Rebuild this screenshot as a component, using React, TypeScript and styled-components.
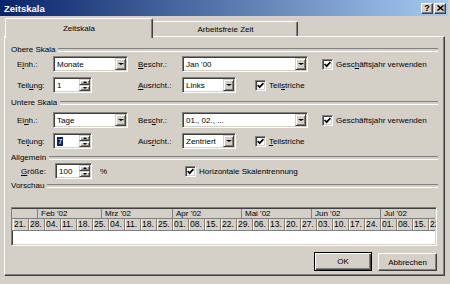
import React from 'react';
import styled, { createGlobalStyle } from 'styled-components';

const Global = createGlobalStyle`
  html, body { margin: 0; padding: 0; background: #d4d0c8; }
  body { font-family: "Liberation Sans", Arial, sans-serif; font-size: 8px; color: #000; }
  * { box-sizing: border-box; }
`;

const Window = styled.div`
  width: 450px;
  height: 284px;
  background: #d4d0c8;
  overflow: hidden;
  display: flex;
  flex-direction: column;
`;

const TitleBar = styled.div`
  height: 16px;
  width: 448px;
  background: linear-gradient(to right, #0a246a, #a6caf0);
  display: flex;
  align-items: center;
  justify-content: space-between;
  padding: 0 2px 0 4px;
`;

const TitleText = styled.span`
  color: #fff;
  font-weight: bold;
  font-size: 9.5px;
`;

const CaptionButtons = styled.div`
  display: flex;
  gap: 1px;
`;

const CaptionButton = styled.div`
  width: 12px;
  height: 11px;
  background: #d4d0c8;
  border-top: 1px solid #fff;
  border-left: 1px solid #fff;
  border-right: 1px solid #404040;
  border-bottom: 1px solid #404040;
  box-shadow: inset -1px -1px 0 #808080;
  display: flex;
  align-items: center;
  justify-content: center;
  font-weight: bold;
  font-size: 9px;
  line-height: 1;
`;

const Body = styled.div`
  padding: 2px 0 0 4px;
  display: flex;
  flex-direction: column;
`;

const TabStrip = styled.div`
  display: flex;
  align-items: flex-end;
  height: 18px;
  padding-left: 1px;
  position: relative;
  z-index: 1;
`;

const Tab = styled.div<{ $active?: boolean; $w: number }>`
  width: ${p => p.$w}px;
  height: ${p => (p.$active ? 20 : 15)}px;
  margin-bottom: ${p => (p.$active ? -2 : 0)}px;
  background: #d4d0c8;
  border-top: 1px solid #fff;
  border-left: 1px solid ${p => (p.$active ? '#fff' : 'transparent')};
  border-right: 1px solid #404040;
  border-radius: 2px 2px 0 0;
  box-shadow: inset -1px 0 0 #808080;
  display: flex;
  align-items: ${p => (p.$active ? 'flex-start' : 'center')};
  padding-top: ${p => (p.$active ? 5 : 0)}px;
  justify-content: center;
  font-size: 8px;
`;

const Panel = styled.div`
  width: 441px;
  height: 240px;
  border-top: 1px solid #fff;
  border-left: 1px solid #fff;
  border-right: 1px solid #404040;
  border-bottom: 1px solid #404040;
  box-shadow: inset -1px -1px 0 #808080;
  padding: 8px 6px 0 6px;
  display: flex;
  flex-direction: column;
`;

const GroupHeader = styled.div<{ $mt: number }>`
  margin-top: ${p => p.$mt}px;
  height: 10px;
  line-height: 10px;
  display: flex;
  align-items: center;
  gap: 3px;
  &::after {
    content: '';
    flex: 1;
    height: 2px;
    border-top: 1px solid #808080;
    border-bottom: 1px solid #fff;
  }
`;

const FormRow = styled.div<{ $mt: number }>`
  display: grid;
  grid-template-columns: 36px 85px 44px 140px auto;
  align-items: center;
  height: 16px;
  margin-top: ${p => p.$mt}px;
  padding-left: 6px;
`;

const SizeRow = styled.div<{ $mt: number }>`
  display: grid;
  grid-template-columns: 34px 45px 85px auto;
  align-items: center;
  height: 16px;
  margin-top: ${p => p.$mt}px;
  padding-left: 10px;
`;

const Label = styled.span`
  white-space: nowrap;
`;

const Mn = styled.span`
  text-decoration: underline;
`;

const Inline = styled.div<{ $gap: number }>`
  display: flex;
  align-items: center;
  gap: ${p => p.$gap}px;
`;

const Field = styled.div<{ $w: number }>`
  width: ${p => p.$w}px;
  height: 16px;
  background: #fff;
  border-top: 1px solid #808080;
  border-left: 1px solid #808080;
  border-right: 1px solid #fff;
  border-bottom: 1px solid #fff;
  box-shadow: inset 1px 1px 0 #404040, inset -1px -1px 0 #d4d0c8;
  display: flex;
  align-items: center;
`;

const FieldText = styled.span`
  flex: 1;
  padding-left: 3px;
  white-space: nowrap;
  overflow: hidden;
`;

const Selected = styled.span`
  background: #0a246a;
  color: #fff;
  padding: 1px 1px;
`;

const RaisedBtn = styled.div`
  background: #d4d0c8;
  border-top: 1px solid #d4d0c8;
  border-left: 1px solid #d4d0c8;
  border-right: 1px solid #404040;
  border-bottom: 1px solid #404040;
  box-shadow: inset 1px 1px 0 #fff, inset -1px -1px 0 #808080;
  display: flex;
  align-items: center;
  justify-content: center;
`;

const DropButton = styled(RaisedBtn)`
  width: 11px;
  height: 12px;
  margin: 1px;
`;

const SpinButtons = styled.div`
  display: flex;
  flex-direction: column;
  margin: 1px;
`;

const SpinButton = styled(RaisedBtn)`
  width: 11px;
  height: 6px;
`;

const Arrow = styled.span<{ $up?: boolean; $size: number }>`
  width: 0;
  height: 0;
  border-left: ${p => p.$size}px solid transparent;
  border-right: ${p => p.$size}px solid transparent;
  ${p => (p.$up ? 'border-bottom' : 'border-top')}: ${p => p.$size - (p.$size > 2 ? 0.5 : 0)}px solid #000;
`;

const CheckWrap = styled.label`
  display: flex;
  align-items: center;
  gap: 3px;
  white-space: nowrap;
`;

const CheckBox = styled.span`
  width: 11px;
  height: 11px;
  background: #fff;
  border-top: 1px solid #808080;
  border-left: 1px solid #808080;
  border-right: 1px solid #fff;
  border-bottom: 1px solid #fff;
  box-shadow: inset 1px 1px 0 #404040, inset -1px -1px 0 #d4d0c8;
  display: flex;
  align-items: center;
  justify-content: center;
`;

const Preview = styled.div`
  margin-top: 16px;
  width: 426px;
  height: 39px;
  background: #fff;
  border-top: 1px solid #808080;
  border-left: 1px solid #808080;
  border-right: 1px solid #fff;
  border-bottom: 1px solid #fff;
  box-shadow: inset 1px 1px 0 #404040, inset -1px -1px 0 #d4d0c8;
  padding: 1px 1px 1px 1px;
  overflow: hidden;
`;

const Timeline = styled.div`
  margin-left: -1px;
  display: flex;
  flex-direction: column;
`;

const TimeRow = styled.div<{ $h: number }>`
  display: flex;
  height: ${p => p.$h}px;
  background: #d4d0c8;
  border-bottom: 1px solid #808080;
  white-space: nowrap;
`;

const MonthCell = styled.div<{ $first?: boolean }>`
  flex: none;
  height: 100%;
  padding-left: 3px;
  line-height: 10px;
  font-size: 8px;
  overflow: hidden;
  border-left: 1px solid ${p => (p.$first ? 'transparent' : '#808080')};
`;

const DayCell = styled.div<{ $first?: boolean }>`
  flex: none;
  width: 16px;
  height: 100%;
  padding-left: 1px;
  line-height: 11px;
  font-size: 8.5px;
  overflow: hidden;
  border-left: 1px solid ${p => (p.$first ? 'transparent' : '#808080')};
  box-shadow: inset 1px 0 0 #fff;
`;

const ButtonRow = styled.div`
  margin-top: 6px;
  display: flex;
  justify-content: flex-end;
  gap: 6px;
  padding-right: 1px;
`;

const PushButton = styled.button<{ $default?: boolean }>`
  width: ${p => (p.$default ? 58 : 59)}px;
  height: ${p => (p.$default ? 19 : 18)}px;
  margin-top: ${p => (p.$default ? 0 : 1)}px;
  background: #d4d0c8;
  font-family: "Liberation Sans", Arial, sans-serif;
  font-size: 8px;
  color: #000;
  padding: 0;
  border: 1px solid ${p => (p.$default ? '#000' : '#404040')};
  ${p => (p.$default ? '' : 'border-top-color: #fff; border-left-color: #fff;')}
  box-shadow: ${p =>
    p.$default
      ? 'inset 1px 1px 0 #fff, inset -1px -1px 0 #404040, inset -2px -2px 0 #808080'
      : 'inset -1px -1px 0 #808080'};
`;

function Combo({ w, text }: { w: number; text: React.ReactNode }) {
  return (
    <Field $w={w}>
      <FieldText>{text}</FieldText>
      <DropButton>
        <Arrow $size={3} />
      </DropButton>
    </Field>
  );
}

function Spin({ w, text }: { w: number; text: React.ReactNode }) {
  return (
    <Field $w={w}>
      <FieldText>{text}</FieldText>
      <SpinButtons>
        <SpinButton>
          <Arrow $up $size={2} />
        </SpinButton>
        <SpinButton>
          <Arrow $size={2} />
        </SpinButton>
      </SpinButtons>
    </Field>
  );
}

function Check({ children }: { children: React.ReactNode }) {
  return (
    <CheckWrap>
      <CheckBox>
        <svg width="7" height="7" viewBox="0 0 7 7">
          <polyline points="0.6,3 2.6,5.2 6.4,1.2" fill="none" stroke="#000" strokeWidth="1.7" />
        </svg>
      </CheckBox>
      <span>{children}</span>
    </CheckWrap>
  );
}

const START = new Date(2002, 0, 21);
const COL = 16;
const DAY_MS = 86400000;
const pos = (d: Date) => ((d.getTime() - START.getTime()) / DAY_MS / 7) * COL;

const days = Array.from({ length: 27 }, (_, i) => {
  const d = new Date(2002, 0, 21 + 7 * i);
  return String(d.getDate()).padStart(2, '0') + '.';
});

const monthStarts = [
  { label: '', d: START },
  { label: "Feb '02", d: new Date(2002, 1, 1) },
  { label: "Mrz '02", d: new Date(2002, 2, 1) },
  { label: "Apr '02", d: new Date(2002, 3, 1) },
  { label: "Mai '02", d: new Date(2002, 4, 1) },
  { label: "Jun '02", d: new Date(2002, 5, 1) },
  { label: "Jul '02", d: new Date(2002, 6, 1) },
  { label: '', d: new Date(2002, 7, 1) },
];

const months = monthStarts.slice(0, -1).map((m, i) => ({
  label: m.label,
  width: Math.round(pos(monthStarts[i + 1].d)) - Math.round(pos(m.d)),
}));

export default function App() {
  return (
    <>
      <Global />
      <Window>
        <TitleBar>
          <TitleText>Zeitskala</TitleText>
          <CaptionButtons>
            <CaptionButton>?</CaptionButton>
            <CaptionButton>
              <svg width="7" height="6" viewBox="0 0 7 6">
                <path d="M0.5 0.5 L6.5 5.5 M6.5 0.5 L0.5 5.5" stroke="#000" strokeWidth="1.5" />
              </svg>
            </CaptionButton>
          </CaptionButtons>
        </TitleBar>
        <Body>
          <TabStrip>
            <Tab $active $w={148}>Zeitskala</Tab>
            <Tab $w={145}>Arbeitsfreie Zeit</Tab>
          </TabStrip>
          <Panel>
            <GroupHeader $mt={0}>Obere Skala</GroupHeader>
            <FormRow $mt={1}>
              <Label>E<Mn>i</Mn>nh.:</Label>
              <Combo w={75} text="Monate" />
              <Label><Mn>B</Mn>eschr.:</Label>
              <Combo w={126} text="Jan '00" />
              <Check>Gesc<Mn>h</Mn>äftsjahr verwenden</Check>
            </FormRow>
            <FormRow $mt={5}>
              <Label>Teil<Mn>u</Mn>ng:</Label>
              <Spin w={39} text="1" />
              <Label><Mn>A</Mn>usricht.:</Label>
              <Inline $gap={19}>
                <Combo w={54} text="Links" />
                <Check>Teil<Mn>s</Mn>triche</Check>
              </Inline>
              <span />
            </FormRow>

            <GroupHeader $mt={5}>Untere Skala</GroupHeader>
            <FormRow $mt={4}>
              <Label>Ei<Mn>n</Mn>h.:</Label>
              <Combo w={75} text="Tage" />
              <Label>Bes<Mn>c</Mn>hr.:</Label>
              <Combo w={126} text="01., 02., ..." />
              <Check>Geschäfts<Mn>j</Mn>ahr verwenden</Check>
            </FormRow>
            <FormRow $mt={5}>
              <Label>Tei<Mn>l</Mn>ung:</Label>
              <Spin w={39} text={<Selected>7</Selected>} />
              <Label>Aus<Mn>r</Mn>icht.:</Label>
              <Inline $gap={19}>
                <Combo w={54} text="Zentriert" />
                <Check><Mn>T</Mn>eilstriche</Check>
              </Inline>
              <span />
            </FormRow>

            <GroupHeader $mt={4}>Allgemein</GroupHeader>
            <SizeRow $mt={0}>
              <Label><Mn>G</Mn>röße:</Label>
              <Spin w={37} text="100" />
              <Label>%</Label>
              <Check>Horizontale Skalentrennung</Check>
            </SizeRow>

            <GroupHeader $mt={2}>Vorschau</GroupHeader>
            <Preview>
              <Timeline>
                <TimeRow $h={10}>
                  {months.map((m, i) => (
                    <MonthCell key={i} $first={i === 0} style={{ width: m.width }}>
                      {m.label}
                    </MonthCell>
                  ))}
                </TimeRow>
                <TimeRow $h={12}>
                  {days.map((d, i) => (
                    <DayCell key={i} $first={i === 0}>{d}</DayCell>
                  ))}
                </TimeRow>
              </Timeline>
            </Preview>

            <ButtonRow>
              <PushButton $default>OK</PushButton>
              <PushButton>Abbrechen</PushButton>
            </ButtonRow>
          </Panel>
        </Body>
      </Window>
    </>
  );
}
